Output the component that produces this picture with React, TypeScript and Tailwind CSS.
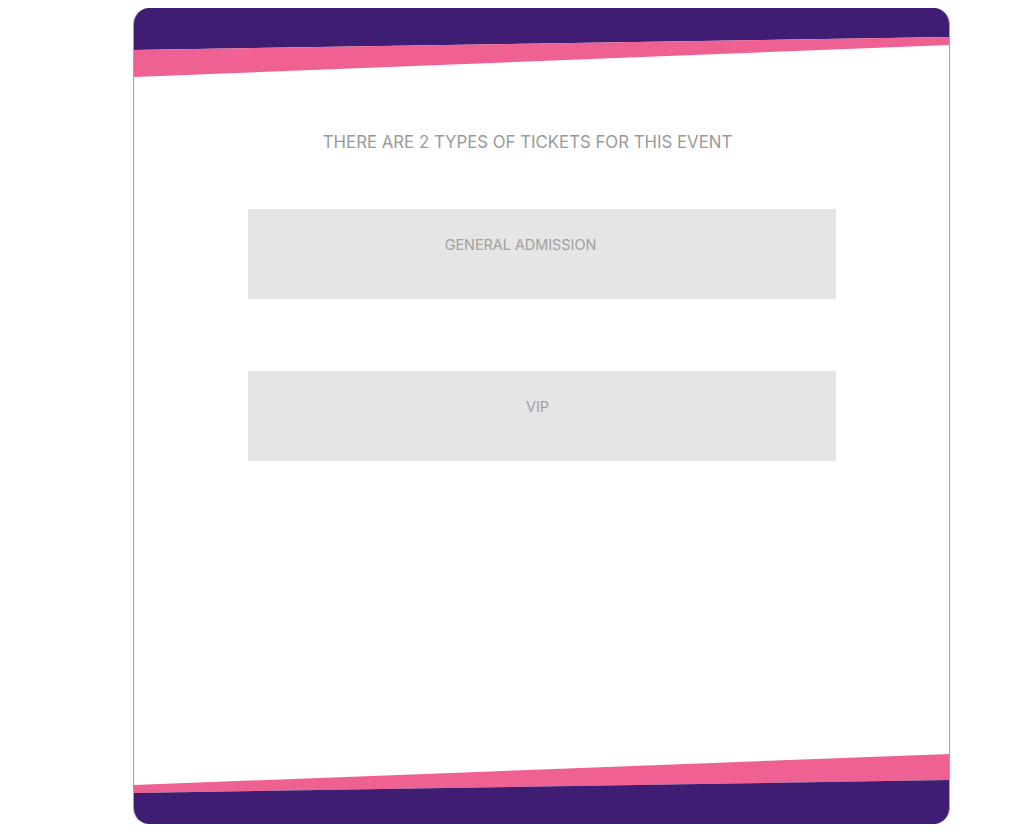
const tickets = [
  { name: "GENERAL ADMISSION", shift: "pr-[42px]" },
  { name: "VIP", shift: "pr-[8px]" },
];

function TopBanner() {
  return (
    <svg viewBox="0 0 816 70" preserveAspectRatio="none" className="block w-full h-[70px] shrink-0">
      <polygon points="0,0 816,0 816,29 0,42" fill="#3e1d72" />
      <polygon points="0,42 816,29 816,37 0,69" fill="#ef6192" />
    </svg>
  );
}

function BottomBanner() {
  return (
    <svg viewBox="0 0 816 70" preserveAspectRatio="none" className="block w-full h-[70px] shrink-0">
      <polygon points="0,31 816,0 816,26 0,39" fill="#ef6192" />
      <polygon points="0,39 816,26 816,70 0,70" fill="#3e1d72" />
    </svg>
  );
}

export default function App() {
  return (
    <div className="w-full h-[832px] bg-white pt-2 font-['Inter','Liberation_Sans',sans-serif]">
      <div className="ml-[133px] w-[817px] h-[816px] rounded-2xl overflow-hidden border-x border-[#a99bc9] flex flex-col bg-white">
        <TopBanner />
        <div className="flex-1 flex flex-col items-center">
          <h1 className="mt-[52px] pr-[28px] text-[16.8px] leading-6 text-[#9a9a9a] font-normal">
            THERE ARE 2 TYPES OF TICKETS FOR THIS EVENT
          </h1>
          <div className="mt-[55px] flex flex-col gap-[72px]">
            {tickets.map((t) => (
              <div key={t.name} className={`w-[588px] h-[90px] bg-[#e5e5e5] pt-[23px] text-center ${t.shift}`}>
                <span className="text-[14.4px] leading-5 text-[#a0a0a0]">{t.name}</span>
              </div>
            ))}
          </div>
        </div>
        <BottomBanner />
      </div>
    </div>
  );
}
